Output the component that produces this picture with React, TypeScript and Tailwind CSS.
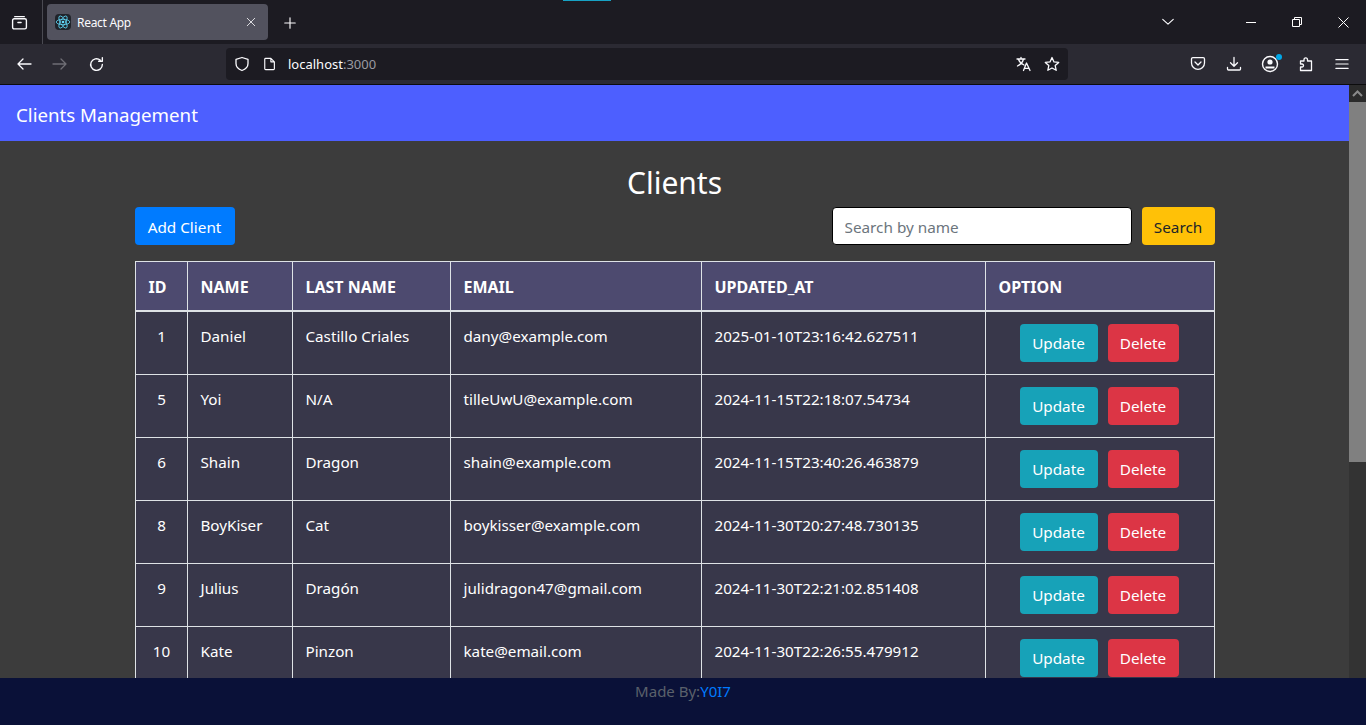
const rows = [
  ["1", "Daniel", "Castillo Criales", "dany@example.com", "2025-01-10T23:16:42.627511"],
  ["5", "Yoi", "N/A", "tilleUwU@example.com", "2024-11-15T22:18:07.54734"],
  ["6", "Shain", "Dragon", "shain@example.com", "2024-11-15T23:40:26.463879"],
  ["8", "BoyKiser", "Cat", "boykisser@example.com", "2024-11-30T20:27:48.730135"],
  ["9", "Julius", "Dragón", "julidragon47@gmail.com", "2024-11-30T22:21:02.851408"],
  ["10", "Kate", "Pinzon", "kate@email.com", "2024-11-30T22:26:55.479912"],
];

const ui = "font-['Noto_Sans','Liberation_Sans',sans-serif]";

function Ico({ className = "", size = 16, children }: { className?: string; size?: number; children: React.ReactNode }) {
  return (
    <svg width={size} height={size} viewBox="0 0 16 16" fill="none" stroke="currentColor" strokeWidth={1.3} strokeLinecap="round" strokeLinejoin="round" className={className}>
      {children}
    </svg>
  );
}

function TabBar() {
  return (
    <div className="relative flex h-11 items-center bg-[#1c1b22] text-[#fbfbfe]">
      <div className="absolute left-[563px] top-0 h-px w-12 bg-[#17a2c4]" />
      <div className="flex w-[43px] shrink-0 items-center justify-center self-stretch border-r border-[#4a4a52]">
        <Ico size={17} className="-ml-[3px]">
          <path d="M3.5 2.5h9M1.5 6c0-1 .6-1.500 1.500-1.500h10c.9 0 1.500.5 1.500 1.500v6.500c0 1-.6 1.500-1.500 1.500H3c-.9 0-1.500-.5-1.500-1.500zM6.500 8h3" />
        </Ico>
      </div>
      <div className="ml-1 flex h-9 w-[221px] items-center rounded bg-[#52525e] pl-2 pr-3">
        <svg width="16" height="16" viewBox="0 0 16 16" className="shrink-0 rounded-sm bg-[#20232a]" fill="none" stroke="#61dafb" strokeWidth="0.8">
          <circle cx="8" cy="8" r="1.3" fill="#61dafb" stroke="none" />
          <ellipse cx="8" cy="8" rx="6.8" ry="2.7" />
          <ellipse cx="8" cy="8" rx="6.8" ry="2.7" transform="rotate(60 8 8)" />
          <ellipse cx="8" cy="8" rx="6.8" ry="2.7" transform="rotate(120 8 8)" />
        </svg>
        <span className="ml-1.5 flex-1 pt-[2px] text-xs tracking-[-0.3px]">React App</span>
        <Ico size={10}>
          <path d="M2 2l12 12M14 2L2 14" />
        </Ico>
      </div>
      <div className="ml-[15px] pt-[2px]">
        <Ico size={14}>
          <path d="M8 2v12M2 8h12" />
        </Ico>
      </div>
      <div className="flex-1" />
      <Ico size={14} className="mr-[53px]">
        <path d="M2 5l6 5.500L14 5" />
      </Ico>
      <div className="flex items-center">
        <div className="flex w-[46px] justify-center">
          <div className="h-px w-2.5 bg-white" />
        </div>
        <div className="flex w-[46px] justify-center">
          <svg width="10" height="10" viewBox="0 0 10 10" fill="none" stroke="white" strokeWidth="1">
            <path d="M.5 2.500h7v7h-7zM2.500 2.500v-2h7v7h-2" />
          </svg>
        </div>
        <div className="flex w-[46px] justify-center">
          <svg width="11" height="11" viewBox="0 0 11 11" fill="none" stroke="white" strokeWidth="1">
            <path d="M.5.500l10 10M10.500.500l-10 10" />
          </svg>
        </div>
      </div>
    </div>
  );
}

function ToolBar() {
  return (
    <div className="flex h-[41px] items-center border-b border-[#0c0c0d] bg-[#2b2a33] text-[#fbfbfe]">
      <div className="flex w-[226px] shrink-0 items-center pl-4">
        <Ico>
          <path d="M15 8H2M7 3L2 8l5 5" />
        </Ico>
        <Ico className="ml-5 text-[#6f6e75]">
          <path d="M1 8h13M9 3l5 5-5 5" />
        </Ico>
        <Ico className="ml-[20px]" size={17}>
          <path d="M13.500 8A5.500 5.500 0 1 1 11.500 3.800M13.500 1.500V5H10" />
        </Ico>
      </div>
      <div className="flex h-8 w-[842px] items-center rounded bg-[#1c1b22] pl-2 pr-2">
        <Ico>
          <path d="M8 1.500l6 1.800v4.200c0 3.500-2.800 5.800-6 7-3.200-1.200-6-3.500-6-7V3.300z" />
        </Ico>
        <Ico className="ml-[13px]" size={14}>
          <path d="M3 1.500h6l4 4v8c0 .6-.4 1-1 1H3c-.6 0-1-.4-1-1v-11c0-.6.4-1 1-1zM9 1.500v4h4" />
        </Ico>
        <span className="ml-[11px] flex-1 pt-px text-[13px]">
          localhost<span className="text-[#9a9aa0]">:3000</span>
        </span>
        <Ico>
          <path d="M1 3h8M5 1.300V3M7.500 3C6.800 6 4.500 8.500 1.500 10M2.500 3.500C3.500 6 5.500 8 8 9M7.500 14.500l3-7.500 3.500 7.500M8.700 12.300h4.300" />
        </Ico>
        <Ico className="ml-[12px]">
          <path d="M8 1.500l2 4.400 4.700.5-3.500 3.200 1 4.700L8 12l-4.200 2.300 1-4.700L1.300 6.400 6 5.900z" />
        </Ico>
      </div>
      <div className="flex-1" />
      <div className="mr-1.5 flex items-center">
        <div className="flex w-9 justify-center">
          <Ico>
            <path d="M1.500 3c0-.8.6-1.300 1.300-1.300h10.400c.7 0 1.300.5 1.300 1.300v4c0 3.600-3 6.300-6.500 6.300S1.500 10.600 1.500 7zM5 6l3 3 3-3" />
          </Ico>
        </div>
        <div className="flex w-9 justify-center">
          <Ico>
            <path d="M8 1.500V10M4.500 6.800L8 10.300l3.500-3.500M1.500 11.500v1.500c0 .6.400 1 1 1h11c.6 0 1-.4 1-1v-1.500" />
          </Ico>
        </div>
        <div className="relative flex w-9 justify-center">
          <svg width="18" height="18" viewBox="0 0 18 18" fill="none" stroke="currentColor" strokeWidth="1.4">
            <circle cx="9" cy="9" r="7.500" />
            <circle cx="9" cy="7" r="2.600" fill="currentColor" stroke="none" />
            <path d="M4.500 12.500h9" strokeWidth="2" />
          </svg>
          <span className="absolute right-[6px] -top-[1px] h-[6px] w-[6px] rounded-full bg-[#00a8e8]" />
        </div>
        <div className="flex w-9 justify-center">
          <Ico>
            <path d="M2.500 14.500V11h1.500c2 0 2-3 0-3H2.500V5H6V3.800c0-2.600 3.500-2.600 3.500 0V5h4v9.500z" />
          </Ico>
        </div>
        <div className="flex w-9 justify-center">
          <Ico size={14}>
            <path d="M1 3h14M1 8h14M1 13h14" />
          </Ico>
        </div>
      </div>
    </div>
  );
}

function ScrollBar() {
  return (
    <div className="flex w-[17px] shrink-0 flex-col bg-[#333333]">
      <div className="flex h-[17px] items-center justify-center bg-[#2b2b2b]">
        <svg width="11" height="7" viewBox="0 0 11 7" fill="none" stroke="#8a8a8a" strokeWidth="2">
          <path d="M1 6l4.500-4.500L10 6" />
        </svg>
      </div>
      <div className="h-[360px] bg-[#808080]" />
    </div>
  );
}

const btn = "h-[38px] rounded pt-0.5 text-[15.3px] text-center";
const th = "border border-[#dee2e6] border-b-2 pl-[13px] pr-3 pt-[13px] pb-[11px] text-left font-bold";
const td = "border border-[#dee2e6] pl-[13px] pr-3 pt-3 pb-[25px] align-top text-[15.2px] leading-6";

function Table() {
  return (
    <table className="mt-4 w-[1079px] table-fixed border-collapse text-white">
      <colgroup>
        <col className="w-[52px]" />
        <col className="w-[105px]" />
        <col className="w-[158px]" />
        <col className="w-[251px]" />
        <col className="w-[284px]" />
        <col className="w-[229px]" />
      </colgroup>
      <thead className="bg-[#4d4a6f]">
        <tr className="h-[49px]">
          <th className={th}>ID</th>
          <th className={th}>NAME</th>
          <th className={th}>LAST NAME</th>
          <th className={th}>EMAIL</th>
          <th className={th}>UPDATED_AT</th>
          <th className={th}>OPTION</th>
        </tr>
      </thead>
      <tbody className="bg-[#38374a]">
        {rows.map((r) => (
          <tr key={r[0]} className="h-[63px]">
            <td className={`${td} text-center`}>{r[0]}</td>
            <td className={td}>{r[1]}</td>
            <td className={td}>{r[2]}</td>
            <td className={td}>{r[3]}</td>
            <td className={td}>{r[4]}</td>
            <td className="border border-[#dee2e6] px-3 align-middle">
              <div className="flex justify-center gap-[10px] pr-[1px]">
                <button className={`${btn} w-[78px] bg-[#17a2b8] text-white`}>Update</button>
                <button className={`${btn} w-[71px] bg-[#dc3545] text-white`}>Delete</button>
              </div>
            </td>
          </tr>
        ))}
      </tbody>
    </table>
  );
}

export default function App() {
  return (
    <div className={`flex h-[725px] flex-col overflow-hidden ${ui}`}>
      <TabBar />
      <ToolBar />
      <div className="flex h-[593px] overflow-hidden bg-[#3c3c3c]">
        <div className="min-w-0 flex-1">
          <div className="flex h-14 items-center bg-[#4d5fff] px-4 pt-1 text-[18.7px] text-white">Clients Management</div>
          <div className="mx-auto flex w-[1080px] flex-col">
            <h2 className="mt-[21px] text-center text-[30px] leading-[42px] text-white">Clients</h2>
            <div className="mt-[3px] flex items-center">
              <button className={`${btn} w-[100px] bg-[#007bff] text-white`}>Add Client</button>
              <div className="flex-1" />
              <input
                readOnly
                placeholder="Search by name"
                className="h-[38px] w-[300px] rounded border border-black bg-white px-3 pt-0.5 text-[15.3px] text-[#212529] placeholder:text-[#6c757d]"
              />
              <button className={`${btn} ml-[10px] w-[73px] bg-[#ffc107] text-[#212529]`}>Search</button>
            </div>
            <Table />
          </div>
        </div>
        <ScrollBar />
      </div>
      <div className="h-[47px] bg-[#0a1138] pt-px text-center text-[15px] leading-6 text-[#5b616b]">
        Made By:<span className="text-[#007bff]">Y0I7</span>
      </div>
    </div>
  );
}
